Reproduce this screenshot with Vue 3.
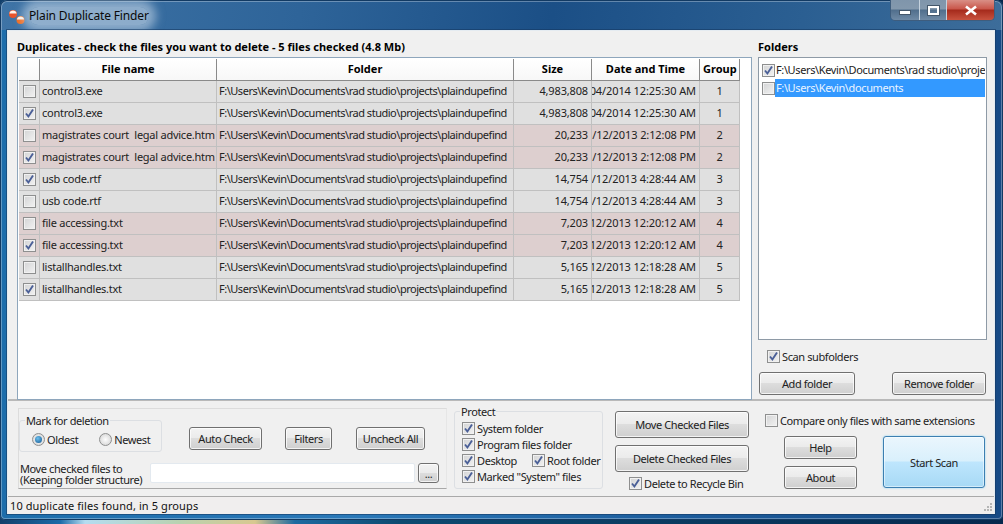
<template>
  <div class="desktop">
    <div class="window">
      <div class="titlebar">
        <svg class="logo" width="20" height="20" viewBox="0 0 20 20">
          <circle cx="5" cy="5" r="4" fill="#e8532a" />
          <path d="M1.4 4.4a3.7 3.7 0 0 1 7.2 0z" fill="#fdf3ea" />
          <circle cx="12.5" cy="11" r="4" fill="#ee6a1f" />
          <path d="M8.9 10.4a3.7 3.7 0 0 1 7.2 0z" fill="#fdf3ea" />
        </svg>
        <span class="title">Plain Duplicate Finder</span>
        <div class="caption">
          <div class="cap-btn cap-min"><i></i></div>
          <div class="cap-btn cap-max"><i></i></div>
          <div class="cap-btn cap-close">
            <svg width="14" height="11" viewBox="0 0 14 11"><path d="M2 1.5l10 8M12 1.5l-10 8" stroke="#fff" stroke-width="2.6" /></svg>
          </div>
        </div>
      </div>

      <div class="client">
        <div class="top">
          <div class="dupes">
            <div class="heading">Duplicates - check the files you want to delete - 5 files checked (4.8 Mb)</div>
            <div class="table-box">
              <div class="row head">
                <div class="cell"></div>
                <div class="cell">File name</div>
                <div class="cell">Folder</div>
                <div class="cell">Size</div>
                <div class="cell">Date and Time</div>
                <div class="cell">Group</div>
              </div>
              <div v-for="(f, i) in files" :key="i" class="row" :class="{ pink: f.group % 2 === 0 }">
                <div class="cell cb-cell">
                  <span class="cb"><svg v-if="f.checked" width="11" height="11" viewBox="0 0 11 11"><path :d="tick" class="tick" /></svg></span>
                </div>
                <div class="cell name">{{ f.name }}</div>
                <div class="cell path">{{ folderPath }}</div>
                <div class="cell right">{{ f.size }}</div>
                <div class="cell right clip"><span>{{ f.date }}</span></div>
                <div class="cell center">{{ f.group }}</div>
              </div>
            </div>
          </div>

          <div class="folders">
            <div class="heading">Folders</div>
            <div class="folder-list">
              <div class="folder-row">
                <span class="cb"><svg width="11" height="11" viewBox="0 0 11 11"><path :d="tick" class="tick" /></svg></span>
                <span class="folder-name">F:\Users\Kevin\Documents\rad studio\projects\plaindupefind</span>
              </div>
              <div class="folder-row">
                <span class="cb"></span>
                <span class="folder-name selected">F:\Users\Kevin\documents</span>
              </div>
            </div>
            <label class="check scan-sub">
              <span class="cb"><svg width="11" height="11" viewBox="0 0 11 11"><path :d="tick" class="tick" /></svg></span>
              Scan subfolders
            </label>
            <div class="folder-btns">
              <button class="add-btn">Add folder</button>
              <button class="remove-btn">Remove folder</button>
            </div>
          </div>
        </div>

        <div class="bottom">
          <div class="left-panel">
            <div class="left-top">
              <fieldset class="mark">
                <legend>Mark for deletion</legend>
                <div class="radios">
                  <span class="radio on"><i></i></span><span class="radio-label">Oldest</span>
                  <span class="radio newest"></span><span class="radio-label">Newest</span>
                </div>
              </fieldset>
              <button class="auto-btn">Auto Check</button>
              <button class="filter-btn">Filters</button>
              <button class="uncheck-btn">Uncheck All</button>
            </div>
            <div class="move-row">
              <div class="move-label">Move checked files to<br />(Keeping folder structure)</div>
              <input class="move-input" type="text" />
              <button class="dots-btn">...</button>
            </div>
          </div>

          <fieldset class="protect">
            <legend>Protect</legend>
            <label class="check">
              <span class="cb"><svg width="11" height="11" viewBox="0 0 11 11"><path :d="tick" class="tick" /></svg></span>System folder
            </label>
            <label class="check">
              <span class="cb"><svg width="11" height="11" viewBox="0 0 11 11"><path :d="tick" class="tick" /></svg></span>Program files folder
            </label>
            <div class="protect-pair">
              <label class="check">
                <span class="cb"><svg width="11" height="11" viewBox="0 0 11 11"><path :d="tick" class="tick" /></svg></span>Desktop
              </label>
              <label class="check">
                <span class="cb"><svg width="11" height="11" viewBox="0 0 11 11"><path :d="tick" class="tick" /></svg></span>Root folder
              </label>
            </div>
            <label class="check">
              <span class="cb"><svg width="11" height="11" viewBox="0 0 11 11"><path :d="tick" class="tick" /></svg></span>Marked "System" files
            </label>
          </fieldset>

          <div class="actions">
            <button class="action-btn">Move Checked Files</button>
            <button class="action-btn">Delete Checked Files</button>
            <label class="check recycle">
              <span class="cb"><svg width="11" height="11" viewBox="0 0 11 11"><path :d="tick" class="tick" /></svg></span>Delete to Recycle Bin
            </label>
          </div>

          <div class="scan-side">
            <label class="check compare"><span class="cb"></span>Compare only files with same extensions</label>
            <div class="scan-row">
              <div class="help-col">
                <button class="help-btn">Help</button>
                <button class="help-btn">About</button>
              </div>
              <button class="start-btn">Start Scan</button>
            </div>
          </div>
        </div>

        <div class="status">
          <span>10 duplicate files found, in 5 groups</span>
          <svg class="grip" width="11" height="11" viewBox="0 0 11 11">
            <path d="M8 1h2v2H8zM5 4h2v2H5zM8 4h2v2H8zM2 7h2v2H2zM5 7h2v2H5zM8 7h2v2H8z" fill="#b5b5b5" />
          </svg>
        </div>
      </div>
    </div>
  </div>
</template>

<script setup>
const folderPath = 'F:\\Users\\Kevin\\Documents\\rad studio\\projects\\plaindupefind'
const tick = 'M2 5.5l2.4 3L9 1.5'

const files = [
  { name: 'control3.exe', size: '4,983,808', date: '01/04/2014 12:25:30 AM', group: 1, checked: false },
  { name: 'control3.exe', size: '4,983,808', date: '01/04/2014 12:25:30 AM', group: 1, checked: true },
  { name: 'magistrates court  legal advice.htm', size: '20,233', date: '11/12/2013 2:12:08 PM', group: 2, checked: false },
  { name: 'magistrates court  legal advice.htm', size: '20,233', date: '11/12/2013 2:12:08 PM', group: 2, checked: true },
  { name: 'usb code.rtf', size: '14,754', date: '11/12/2013 4:28:44 AM', group: 3, checked: true },
  { name: 'usb code.rtf', size: '14,754', date: '11/12/2013 4:28:44 AM', group: 3, checked: false },
  { name: 'file accessing.txt', size: '7,203', date: '11/12/2013 12:20:12 AM', group: 4, checked: false },
  { name: 'file accessing.txt', size: '7,203', date: '11/12/2013 12:20:12 AM', group: 4, checked: true },
  { name: 'listallhandles.txt', size: '5,165', date: '11/12/2013 12:18:28 AM', group: 5, checked: false },
  { name: 'listallhandles.txt', size: '5,165', date: '11/12/2013 12:18:28 AM', group: 5, checked: true }
]
</script>

<style>
html, body {
  margin: 0;
  overflow: hidden;
}
</style>

<style scoped>
.desktop {
  width: 1003px;
  height: 524px;
  overflow: hidden;
  background: linear-gradient(90deg, #123f6a 0, #1a6aa8 60px, #b4dcf0 85px, #b9d2b0 180px, #d8c890 255px, #1d6aa0 295px, #0c4a70 400px, #06284d 100%);
  font-family: "Noto Sans", "DejaVu Sans", sans-serif;
  font-size: 11px;
  letter-spacing: -0.4px;
  color: #000;
}

.window {
  height: 520px;
  box-sizing: border-box;
  padding: 0 8px 6px 7px;
  border-radius: 7px 7px 5px 5px;
  box-shadow: inset 0 0 0 1px #123a63, inset 0 0 0 2px rgba(255, 255, 255, 0.3);
  background:
    linear-gradient(100deg, #3f74a6 0, #2e6499 30%, #1b4f86 55%, #2b5f92 80%, #3d6d9a 100%) 0 0 / 100% 30px no-repeat,
    linear-gradient(90deg, #1d6dab 0, #2a78b8 35%, #1b5a9a 70%, #174a85 100%);
  display: flex;
  flex-direction: column;
}

.titlebar {
  height: 30px;
  flex: none;
  display: flex;
  align-items: flex-start;
}

.logo {
  margin: 9px 0 0 1px;
}

.title {
  margin: 7px 0 0 1px;
  height: 18px;
  line-height: 18px;
  font-size: 12px;
  letter-spacing: -0.15px;
  color: #0a0a0a;
  border-radius: 10px;
  background: rgba(225, 236, 246, 0.5);
  box-shadow: 0 0 10px 7px rgba(225, 236, 246, 0.5);
}

.caption {
  margin-left: auto;
  display: flex;
  height: 21px;
  border: 1px solid #3e5d7e;
  border-top: 0;
  border-radius: 0 0 5px 5px;
  overflow: hidden;
  box-sizing: border-box;
}

.cap-btn {
  display: flex;
  align-items: center;
  justify-content: center;
  background: linear-gradient(#7f95ab 0, #8499ad 45%, #506e8c 50%, #6f8aa5 100%);
  border-left: 1px solid #c5d2de;
}

.cap-min {
  width: 28px;
  border-left: 0;
}

.cap-min i {
  width: 10px;
  height: 3px;
  margin-top: 5px;
  background: #fff;
  border: 1px solid #44576b;
}

.cap-max {
  width: 26px;
}

.cap-max i {
  width: 7px;
  height: 5px;
  border: 2px solid #fff;
  outline: 1px solid #44576b;
}

.cap-close {
  width: 47px;
  background: linear-gradient(#d98f86 0, #c9564a 45%, #a52a1c 50%, #c8523f 100%);
}

.client {
  flex: 1;
  min-height: 0;
  display: flex;
  flex-direction: column;
  background: #f0f0f0;
  border: 1px solid #e4ebf1;
  box-shadow: 0 0 0 1px rgba(20, 55, 95, 0.55);
}

.top {
  height: 370px;
  flex: none;
  box-sizing: border-box;
  display: flex;
  padding: 8px 0 0 9px;
  border-bottom: 2px solid #b9b9b9;
}

.heading {
  height: 18px;
  line-height: 16px;
  font-weight: 700;
  letter-spacing: 0;
}

.dupes {
  width: 735px;
}

.table-box {
  width: 735px;
  height: 343px;
  box-sizing: border-box;
  background: #fff;
  border: 1px solid #8ea6bc;
  padding: 1px;
}

.row {
  width: 721px;
  height: 22px;
  display: grid;
  grid-template-columns: 21px 177px 297px 78px 108px 40px;
  background: #e0e0e0;
}

.row.pink {
  background: #ddcfcf;
}

.row.head {
  height: 22px;
  background: linear-gradient(#fff, #f7f7f7);
  font-weight: 700;
}

.cell {
  box-sizing: border-box;
  line-height: 20px;
  white-space: pre;
  overflow: hidden;
  border-right: 1px solid #c0c0c0;
  border-bottom: 1px solid #c0c0c0;
  padding: 0 3px;
  color: #222;
  letter-spacing: -0.15px;
}

.head .cell {
  text-align: center;
  color: #000;
  letter-spacing: 0;
  border-right-color: #8a8a8a;
  border-bottom: 1px solid #8a8a8a;
}

.cb-cell {
  padding: 4px 0 0 4px;
  line-height: 0;
}

.name {
  padding-left: 2px;
  letter-spacing: -0.25px;
}

.path {
  padding-left: 2px;
  letter-spacing: -0.48px;
}

.right {
  text-align: right;
}

.center {
  text-align: center;
}

.clip {
  display: flex;
  justify-content: flex-end;
  letter-spacing: -0.1px;
}

.clip span {
  flex: none;
}

.cb {
  display: inline-block;
  flex: none;
  width: 13px;
  height: 13px;
  box-sizing: border-box;
  border: 1px solid #8e8f8f;
  box-shadow: inset 0 0 0 1px #f1f1f1;
  background: linear-gradient(135deg, #d3d4d5, #f2f2f2);
  line-height: 0;
}

.cb svg {
  display: block;
}

.tick {
  fill: none;
  stroke: #4a5f97;
  stroke-width: 1.9;
}

.folders {
  margin-left: 6px;
  width: 229px;
}

.folder-list {
  height: 283px;
  box-sizing: border-box;
  background: #fff;
  border: 1px solid #8e9aa6;
  padding: 3px 1px;
  overflow: hidden;
}

.folder-row {
  height: 18px;
  display: flex;
  align-items: center;
  padding-left: 2px;
  overflow: hidden;
}

.folder-name {
  flex: 1;
  min-width: 0;
  height: 18px;
  line-height: 18px;
  padding-left: 1px;
  white-space: nowrap;
  overflow: hidden;
  color: #222;
  letter-spacing: -0.38px;
}

.folder-name.selected {
  background: #3399ff;
  color: #eaf4ff;
}

.check {
  display: flex;
  align-items: center;
  gap: 2px;
  height: 16px;
  white-space: nowrap;
  color: #222;
}

.scan-sub {
  margin: 8px 0 0 9px;
}

.folder-btns {
  display: flex;
  justify-content: space-between;
  margin: 8px 1px 0 1px;
}

button {
  padding: 0;
  font: inherit;
  letter-spacing: inherit;
  color: #222;
  border: 1px solid #707070;
  border-radius: 3px;
  background: linear-gradient(#f3f3f3 0, #ebebeb 48%, #dddddd 50%, #cfcfcf 100%);
  box-shadow: inset 0 0 0 1px rgba(255, 255, 255, 0.75);
}

.add-btn {
  width: 96px;
  height: 23px;
}

.remove-btn {
  width: 94px;
  height: 23px;
}

.bottom {
  flex: none;
  height: 95px;
  box-sizing: border-box;
  display: flex;
  align-items: flex-start;
  padding: 4px 0 0 10px;
}

.left-panel {
  width: 429px;
  height: 81px;
  margin-top: 3px;
  box-sizing: border-box;
  border: 1px solid #dcdcdc;
  border-bottom-color: #a8a8a8;
  border-right-color: #e6e6e6;
}

.left-top {
  display: flex;
  align-items: flex-start;
}

fieldset {
  margin: 0;
  padding: 0;
  border: 1px solid #dcdfe3;
  border-radius: 3px;
  box-sizing: border-box;
}

legend {
  padding: 0 1px;
  margin-left: 5px;
  line-height: 13px;
  color: #222;
}

.mark {
  width: 143px;
  height: 38px;
  margin: 5px 0 0 0;
}

.radios {
  display: flex;
  align-items: center;
  padding: 5px 0 0 12px;
}

.radio {
  width: 13px;
  height: 13px;
  flex: none;
  box-sizing: border-box;
  border-radius: 50%;
  border: 1px solid #8e8f8f;
  background: radial-gradient(#fdfdfd, #cfcfcf);
  display: flex;
  align-items: center;
  justify-content: center;
}

.radio.on i {
  width: 7px;
  height: 7px;
  border-radius: 50%;
  background: radial-gradient(circle at 40% 35%, #6cc0ee, #12558f);
}

.radio.newest {
  margin-left: 21px;
}

.radio-label {
  margin-left: 2px;
  color: #222;
}

.auto-btn {
  width: 73px;
  height: 23px;
  margin: 18px 0 0 27px;
}

.filter-btn {
  width: 47px;
  height: 23px;
  margin: 18px 0 0 23px;
}

.uncheck-btn {
  width: 69px;
  height: 23px;
  margin: 18px 0 0 24px;
}

.move-row {
  display: flex;
  align-items: flex-start;
  margin-top: 11px;
}

.move-label {
  width: 130px;
  margin-left: 1px;
  line-height: 11px;
  white-space: nowrap;
  color: #222;
}

.move-input {
  width: 265px;
  height: 20px;
  box-sizing: border-box;
  border: 1px solid #e3e9ef;
  border-radius: 2px;
  background: #fff;
  padding: 0;
}

.dots-btn {
  width: 21px;
  height: 20px;
  margin: 0 0 0 3px;
}

.protect {
  width: 149px;
  height: 84px;
  margin: 0 0 0 7px;
  padding: 2px 0 0 7px;
}

.protect legend {
  margin-left: -2px;
}

.protect-pair {
  display: flex;
  gap: 15px;
}

.actions {
  width: 134px;
  margin: 2px 0 0 12px;
  display: flex;
  flex-direction: column;
}

.action-btn {
  height: 27px;
  margin-top: 7px;
}

.action-btn:first-child {
  margin-top: 4px;
}

.recycle {
  margin: 3px 0 0 14px;
}

.scan-side {
  margin-left: 16px;
  width: 222px;
}

.compare {
  margin-top: 7px;
}

.scan-row {
  display: flex;
  margin-top: 8px;
}

.help-col {
  margin-left: 19px;
  display: flex;
  flex-direction: column;
  gap: 7px;
}

.help-btn {
  width: 73px;
  height: 23px;
}

.start-btn {
  width: 102px;
  height: 52px;
  margin: 0 0 0 26px;
  border: 1px solid #3c7fb1;
  background: linear-gradient(#eaf6fd 0, #d9f0fc 48%, #bee6fd 50%, #a7d9f5 100%);
  box-shadow: 0 0 2px 0 #7fd0f5, inset 0 0 0 1px rgba(255, 255, 255, 0.5);
}

.status {
  flex: 1;
  display: flex;
  justify-content: space-between;
  align-items: flex-end;
  padding-left: 2px;
  line-height: 17px;
  letter-spacing: 0.1px;
  background: #f0eeee;
  border-top: 1px solid #a9a9a9;
  color: #111;
}

.grip {
  margin: 0 1px 1px 0;
}
</style>
